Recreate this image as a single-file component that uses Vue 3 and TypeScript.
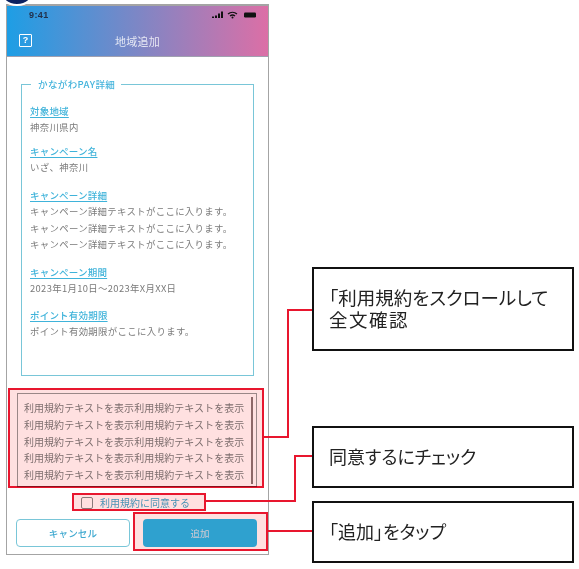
<script setup lang="ts">
interface Section { title: string; lines: string[]; gap: string }
const sections: Section[] = [
  { title: '対象地域', lines: ['神奈川県内'], gap: 'g7' },
  { title: 'キャンペーン名', lines: ['いざ、神奈川'], gap: 'g12' },
  { title: 'キャンペーン詳細', lines: Array(3).fill('キャンペーン詳細テキストがここに入ります。'), gap: 'g11' },
  { title: 'キャンペーン期間', lines: ['2023年1月10日～2023年X月XX日'], gap: 'g11' },
  { title: 'ポイント有効期限', lines: ['ポイント有効期限がここに入ります。'], gap: 'g11' },
]
const terms: string[] = Array(5).fill('利用規約テキストを表示利用規約テキストを表示')
</script>

<template>
  <div class="canvas">
    <div class="badge"></div>
    <main class="phone">
      <header class="head">
        <div class="status">
          <span class="time">9:41</span>
          <svg class="sicons" width="45" height="8" viewBox="0 0 45 8">
            <rect x="0" y="5.5" width="2" height="1.5" fill="#111" />
            <rect x="3" y="4.5" width="2" height="2.5" fill="#111" />
            <rect x="6" y="2.5" width="2" height="4.5" fill="#111" />
            <rect x="9" y="0.5" width="2" height="6.5" fill="#111" />
            <path d="M16 3a7 7 0 0 1 9 0M18 5a4 4 0 0 1 5 0" stroke="#111" stroke-width="1.3" fill="none" />
            <circle cx="20.5" cy="6.6" r="1" fill="#111" />
            <rect x="32" y="1.5" width="12" height="5" rx="1.2" fill="#111" />
          </svg>
        </div>
        <div class="bar">
          <span class="help">?</span>
          <span class="title">地域追加</span>
        </div>
      </header>
      <section class="body">
        <div class="detail">
          <div class="legend">かながわPAY詳細</div>
          <div v-for="s in sections" :key="s.title" class="item" :class="s.gap">
            <div class="label">{{ s.title }}</div>
            <div v-for="(l, i) in s.lines" :key="i" class="line">{{ l }}</div>
          </div>
        </div>
        <div class="terms">
          <div class="tlines">
            <div v-for="(t, i) in terms" :key="i">{{ t }}</div>
          </div>
          <div class="scroll"></div>
        </div>
        <label class="agree"><span class="check"></span><span>利用規約に同意する</span></label>
        <div class="btns">
          <button class="btn cancel">キャンセル</button>
          <button class="btn add">追加</button>
        </div>
      </section>
    </main>
    <div class="notes">
      <div class="note n1">「利用規約をスクロールして<br /><span class="wide">全文確認</span></div>
      <div class="note n2">同意するにチェック</div>
      <div class="note n3">「追加」をタップ</div>
    </div>

    <div class="mark m1"></div>
    <div class="mark m2"></div>
    <div class="mark m3"></div>
    <svg class="wires" width="579" height="569" viewBox="0 0 579 569">
      <path d="M263 437H288V310H312M205 501H295V456H312M267 531H312" fill="none" stroke="#e8162e" stroke-width="2" />
    </svg>
  </div>
</template>

<style>
html, body { margin: 0; background: #fff; }
</style>

<style scoped>
.canvas {
  position: relative;
  width: 579px;
  height: 569px;
  overflow: hidden;
  display: flex;
  background: #fff;
  font-family: "Noto Sans CJK JP", "Noto Sans", sans-serif;
}
.badge {
  position: absolute;
  left: -3px;
  top: -34px;
  width: 36px;
  height: 36px;
  border-radius: 50%;
  background: #0d2260;
  border: 2px solid #fff;
  z-index: 2;
}
.phone {
  box-sizing: border-box;
  width: 263px;
  height: 551px;
  margin: 4px 0 0 6px;
  border: 1px solid #a4a4a4;
  border-top-width: 2px;
  display: flex;
  flex-direction: column;
  flex: none;
}
.head {
  height: 51px;
  flex: none;
  background: linear-gradient(90deg, #1e9ee5, #dc6fa6);
  border-bottom: 1px solid #a0a0b0;
  box-sizing: border-box;
  color: #fff;
}
.status {
  height: 12px;
  padding: 3px 11px 0 22px;
  display: flex;
  justify-content: space-between;
  align-items: center;
}
.time { font: 700 9px "Liberation Sans", sans-serif; color: #22304a; letter-spacing: 0.4px; }
.bar {
  position: relative;
  display: flex;
  justify-content: center;
  align-items: center;
  height: 36px;
}
.help {
  position: absolute;
  left: 12px;
  top: 13px;
  box-sizing: border-box;
  width: 13px;
  height: 13px;
  border: 1.5px solid #fff;
  border-radius: 1px;
  font: 700 9px/10px "Liberation Sans", sans-serif;
  text-align: center;
}
.title { font-size: 11px; margin-top: 4px; opacity: 0.8; letter-spacing: 0.2px; }
.body { flex: 1; padding: 27px 0 0; display: flex; flex-direction: column; position: relative; }
.detail {
  position: relative;
  box-sizing: border-box;
  margin: 0 14px;
  height: 292px;
  border: 1px solid #79c6d8;
  padding: 18px 8px 0;
}
.legend {
  position: absolute;
  left: 9px;
  top: -8px;
  padding: 0 6px 0 7px;
  background: #fff;
  font-size: 9.5px;
  line-height: 14px;
  font-weight: 500;
  color: #45b4dc;
  letter-spacing: 0.4px;
}
.g7 { margin-bottom: 7px; }
.g11 { margin-bottom: 11px; }
.g12 { margin-bottom: 12px; }
.label {
  font-size: 9.5px;
  line-height: 16px;
  font-weight: 500;
  color: #3fb3da;
  letter-spacing: 0.2px;
  text-decoration: underline;
  text-underline-offset: 1.5px;
}
.line {
  font-size: 9.4px;
  line-height: 16.5px;
  color: #7a7a7a;
  letter-spacing: 0.35px;
}
.terms {
  position: relative;
  box-sizing: border-box;
  margin: 17px 11px 0 10px;
  height: 94px;
  border: 1px solid #9a9a9a;
  padding: 6px 0 0 6px;
}
.tlines {
  font-size: 10px;
  line-height: 16.8px;
  color: #7d7d7d;
  white-space: nowrap;
  letter-spacing: 0.04px;
}
.scroll {
  position: absolute;
  right: 3px;
  top: 3px;
  bottom: 2px;
  width: 2px;
  background: #8d7575;
}
.agree {
  display: flex;
  align-items: center;
  gap: 7px;
  margin: 9px 0 0 74px;
  height: 14px;
  font-size: 10px;
  line-height: 14px;
  color: #4aa8cf;
}
.check {
  box-sizing: border-box;
  width: 12px;
  height: 12px;
  border: 1px solid #8a8a8a;
  border-radius: 2px;
  background: #fff;
}
.btns {
  display: flex;
  justify-content: space-between;
  margin: 9px 0 0;
  padding: 0 11px 0 9px;
}
.btn {
  width: 114px;
  height: 28px;
  padding: 0;
  border-radius: 4px;
  font-family: inherit;
  font-size: 9.5px;
  font-weight: 500;
}
.cancel { background: #fff; border: 1px solid #79c6d8; color: #3fa9d0; letter-spacing: 0.2px; }
.add { background: #2fb8ec; border: 0; color: #cfe6f0; font-weight: 400; }
.notes {
  box-sizing: border-box;
  margin-left: 43px;
  padding-top: 267px;
  display: flex;
  flex-direction: column;
  width: 262px;
  flex: none;
}
.note {
  box-sizing: border-box;
  border: 2px solid #111;
  background: #fff;
  color: #222;
  font-family: "Liberation Sans", "Noto Sans CJK JP", sans-serif;
  font-size: 18px;
  line-height: 22px;
  padding-left: 15px;
  font-feature-settings: "palt";
}
.n1 { height: 84px; padding-top: 19px; font-size: 18.5px; }
.wide { letter-spacing: 1.5px; }
.n2 { height: 62px; margin-top: 75px; padding-top: 19px; }
.n3 { height: 62px; margin-top: 13px; padding-top: 19px; }
.mark {
  position: absolute;
  box-sizing: border-box;
  border: 2px solid #e8162e;
  background: #ffe0e0;
  mix-blend-mode: multiply;
}
.m1 { left: 8px; top: 388px; width: 256px; height: 100px; }
.m2 { left: 72px; top: 493px; width: 134px; height: 18px; }
.m3 { left: 133px; top: 512px; width: 135px; height: 39px; }
.wires { position: absolute; left: 0; top: 0; pointer-events: none; }
</style>
